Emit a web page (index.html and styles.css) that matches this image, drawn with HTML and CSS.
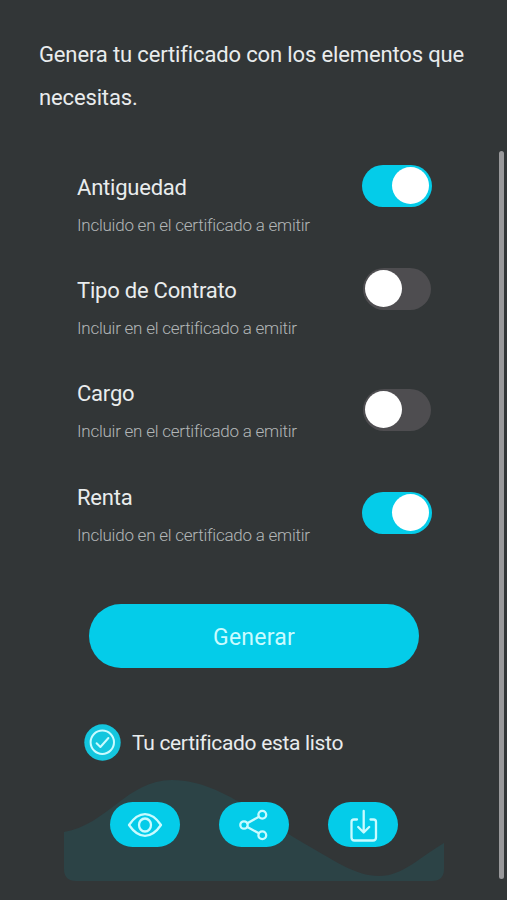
FILE: index.html
```html
<!DOCTYPE html>
<html lang="es">
<head>
    <meta charset="UTF-8">
    <meta name="viewport" content="width=device-width, initial-scale=1.0">
    <title>Generar certificado</title>
    <link rel="stylesheet" href="styles.css">
</head>
<body>
    <header>
        <h1>Genera tu certificado con los elementos que necesitas.</h1>
    </header>
    <div class="scroll-area">
        <main>
            <section class="options">
                <div class="option">
                    <div class="option-text">
                        <h2>Antiguedad</h2>
                        <p>Incluido en el certificado a emitir</p>
                    </div>
                    <div class="switch on"></div>
                </div>
                <div class="option">
                    <div class="option-text">
                        <h2>Tipo de Contrato</h2>
                        <p>Incluir en el certificado a emitir</p>
                    </div>
                    <div class="switch"></div>
                </div>
                <div class="option low">
                    <div class="option-text">
                        <h2>Cargo</h2>
                        <p>Incluir en el certificado a emitir</p>
                    </div>
                    <div class="switch"></div>
                </div>
                <div class="option low">
                    <div class="option-text">
                        <h2>Renta</h2>
                        <p>Incluido en el certificado a emitir</p>
                    </div>
                    <div class="switch on"></div>
                </div>
            </section>
            <button class="generate">Generar</button>
            <div class="status">
                <svg class="check" viewBox="0 0 37 37">
                    <circle cx="18.5" cy="18.5" r="18.2" fill="#13c6de"/>
                    <circle cx="18.3" cy="18.2" r="11.7"/>
                    <path d="M12.6 19.2l3.8 3.8 8-9"/>
                </svg>
                <span>Tu certificado esta listo</span>
            </div>
            <div class="result">
                <svg class="wave" viewBox="0 0 380 102">
                    <path d="M0 53C43 46 63 1 108 1C157 1 200 42 241 65C270 81 291 97 315 97C339 97 356 78 380 64V90Q380 102 368 102H12Q0 102 0 90Z"/>
                </svg>
                <div class="actions">
                    <button class="action" aria-label="Ver">
                        <svg viewBox="0 0 36 36">
                            <path d="M2 18C6.500 11.500 11.500 7.200 18 7.200S29.500 11.500 34 18C29.500 24.500 24.500 28.800 18 28.800S6.500 24.500 2 18Z"/>
                            <ellipse cx="18" cy="18" rx="6" ry="6.500"/>
                        </svg>
                    </button>
                    <button class="action" aria-label="Compartir">
                        <svg viewBox="0 0 36 36">
                            <circle cx="8" cy="18" r="3.700"/>
                            <circle cx="26.300" cy="7.800" r="3.900"/>
                            <circle cx="26.300" cy="28.300" r="3.900"/>
                            <path d="M11.300 16.200L22.900 9.700M11.300 19.900L22.900 26.300"/>
                        </svg>
                    </button>
                    <button class="action" aria-label="Descargar">
                        <svg viewBox="0 0 36 36">
                            <path d="M12 12.500H9Q6.500 12.500 6.500 15V30.500Q6.500 33.500 9.500 33.500H28Q31 33.500 31 30.500V15Q31 12.500 28.500 12.500H25.500"/>
                            <path d="M18.700 4V25M13.200 20L18.700 25.500L24.200 20"/>
                        </svg>
                    </button>
                </div>
            </div>
        </main>
        <div class="scrollbar"></div>
    </div>
</body>
</html>
```
FILE: styles.css
```css
* {
    box-sizing: border-box;
}

body {
    margin: 0;
    height: 900px;
    overflow: hidden;
    background-color: #323637;
    color: #e9eced;
    font-family: Roboto, "Open Sans", sans-serif;
}

header {
    height: 151px;
    padding: 33px 36px 0 39px;
}

h1 {
    margin: 0;
    font-size: 22px;
    font-weight: 400;
    line-height: 43px;
    letter-spacing: -0.14px;
}

h2, p {
    margin: 0;
    font-weight: 400;
    white-space: nowrap;
}

.scroll-area {
    display: flex;
    justify-content: space-between;
    height: 728px;
    padding-right: 3px;
}

main {
    width: 380px;
    margin-left: 64px;
}

.scrollbar {
    width: 5px;
    border-radius: 3px;
    background: #99999b;
}

.options {
    height: 453px;
    padding: 14px 12px 0 13px;
}

.option {
    display: flex;
    justify-content: space-between;
    height: 103.2px;
}

h2 {
    margin-top: 6px;
    font-size: 22px;
    line-height: 34px;
    letter-spacing: -0.22px;
}

.option p {
    margin-top: 6px;
    color: #b2b6b7;
    font-size: 17px;
    font-weight: 300;
    line-height: 28px;
    letter-spacing: -0.24px;
}

.switch {
    width: 68px;
    height: 42px;
    margin-right: 1px;
    padding: 2px;
    border-radius: 21px;
    background: #4e4d50;
}

.switch::after {
    content: "";
    display: block;
    width: 37px;
    height: 37px;
    border-radius: 50%;
    background: #fff;
}

.switch.on {
    width: 70px;
    margin-right: 0;
    background: #04cce9;
}

.switch.on::after {
    margin-left: 28px;
}

.low .switch {
    margin-top: 18px;
}

.low .switch.on {
    margin-top: 17px;
}

button {
    border: none;
    padding: 0;
    background: #04cce9;
    color: #c9fbff;
    font-family: inherit;
}

.generate {
    display: block;
    width: 330px;
    height: 64px;
    margin: 0 0 0 25px;
    padding-top: 2px;
    border-radius: 32px;
    font-size: 23px;
    letter-spacing: 0.2px;
}

.status {
    display: flex;
    align-items: center;
    gap: 11px;
    height: 37px;
    margin: 56px 0 0 20px;
    font-size: 21px;
    letter-spacing: -0.32px;
    white-space: nowrap;
}

svg {
    display: block;
    flex: none;
    fill: none;
    stroke: #c9fbff;
    stroke-width: 2.3;
    stroke-linecap: round;
    stroke-linejoin: round;
}

.check {
    width: 37px;
    height: 37px;
    stroke-width: 2;
}

.check circle:first-child {
    stroke: none;
}

.result {
    display: grid;
    margin-top: 18px;
}

.wave,
.actions {
    grid-area: 1 / 1;
}

.wave {
    width: 380px;
    height: 102px;
    fill: #2c4346;
    stroke: none;
}

.actions {
    display: flex;
    justify-content: space-between;
    align-items: flex-start;
    padding: 23px 46px 0;
}

.action {
    display: flex;
    justify-content: center;
    align-items: center;
    width: 70px;
    height: 45px;
    border-radius: 23px;
}

.action svg {
    width: 36px;
    height: 36px;
}
```
